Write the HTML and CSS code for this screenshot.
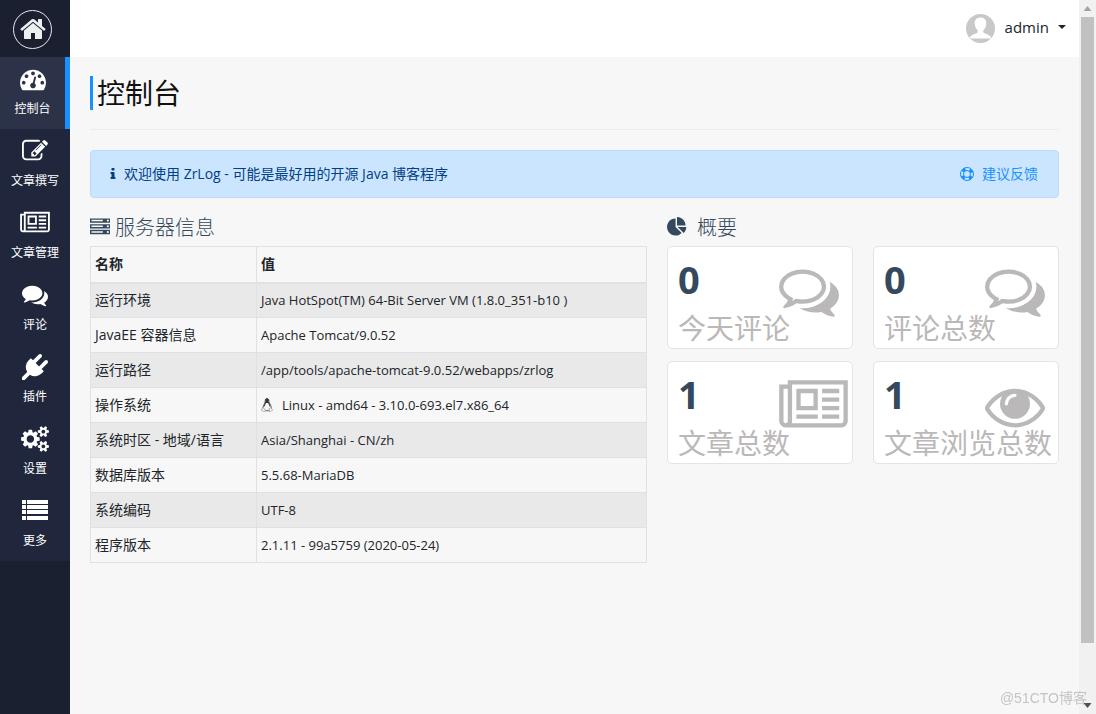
FILE: index.html
```html
<!DOCTYPE html>
<html lang="zh-CN">
<head>
<meta charset="utf-8">
<meta name="viewport" content="width=device-width, initial-scale=1">
<title>控制台</title>
<link rel="stylesheet" href="styles.css">
</head>
<body>
<svg class="sprite" aria-hidden="true">
  <symbol id="comments-o" viewBox="0 0 1792 1792" preserveAspectRatio="xMinYMid meet"><path d="M704 384q-153 0-286 52t-211.5 141-78.5 191q0 82 53 158t149 132l97 56-35 84q34-20 62-39l44-31 53 10q78 14 153 14 153 0 286-52t211.5-141 78.5-191-78.5-191-211.5-141-286-52zm0-128q191 0 353.500 68.500t256.500 186.500 94 257-94 257-256.500 186.500-353.500 68.500q-86 0-176-16-124 88-278 128-36 9-86 16h-3q-11 0-20.500-8t-11.500-21q-1-3-1-6.500t.5-6.500 2-6l2.500-5 3.500-5.500 4-5 4.500-5 4-4.500q5-6 23-25t26-29.500 22.500-29 25-38.500 20.500-44q-124-72-195-177t-71-224q0-139 94-257t256.500-186.500 353.500-68.500zm822 1169q10 24 20.500 44t25 38.500 22.500 29 26 29.500 23 25q1 1 4 4.500t4.500 5 4 5 3.500 5.500l2.500 5 2 6 .5 6.500-1 6.500q-3 14-13 22t-22 7q-50-7-86-16-154-40-278-128-90 16-176 16-271 0-472-132 58 4 88 4 161 0 309-45t264-129q125-92 192-212t67-254q0-77-23-152 129 71 204 178t75 230q0 120-71 224.500t-195 176.500z"/></symbol>
  <symbol id="newspaper" viewBox="0 0 2048 1792"><path fill-rule="evenodd" d="M1024 512h-384v384h384v-384zm128 640v128h-640v-128h640zm0-768v640h-640v-640h640zm640 768v128h-512v-128h512zm0-256v128h-512v-128h512zm0-256v128h-512v-128h512zm0-256v128h-512v-128h512zm-1536 960v-960h-128v960q0 26 19 45t45 19 45-19 19-45zm1664 0v-1088h-1536v1088q0 33-11 64h1483q26 0 45-19t19-45zm128-1216v1216q0 80-56 136t-136 56h-1664q-80 0-136-56t-56-136v-1088h256v-128h1792z"/></symbol>
</svg>
<div class="app">
  <aside class="sidebar">
    <a class="logo" href="#" aria-label="首页"><span class="logo-ring"><svg class="logo-icon" viewBox="0 0 1792 1792"><path d="M1472 992v480q0 26-19 45t-45 19h-384v-384h-256v384h-384q-26 0-45-19t-19-45v-480q0-1 .5-3t.5-3l575-474 575 474q1 2 1 6zm223-69l-62 74q-8 9-21 11h-3q-13 0-21-7l-692-577-692 577q-12 8-24 7-13-2-21-11l-62-74q-8-10-7-23.500t11-21.500l719-599q32-26 76-26t76 26l244 204v-195q0-14 9-23t23-9h192q14 0 23 9t9 23v408l219 182q10 8 11 21.500t-7 23.500z"/></svg></span></a>
    <nav class="menu">
      <a class="menu-item active" href="#"><svg class="menu-icon" viewBox="0 0 1792 1792"><path fill-rule="evenodd" d="M384 1152q0-53-37.500-90.500t-90.500-37.500-90.500 37.500-37.500 90.500 37.500 90.500 90.500 37.500 90.500-37.500 37.500-90.500zm192-448q0-53-37.500-90.500t-90.500-37.500-90.500 37.500-37.500 90.500 37.500 90.500 90.500 37.500 90.500-37.500 37.500-90.500zm428 481l101-382q6-26-7.500-48.500t-38.500-29.500-48 6.500-30 39.500l-101 382q-60 5-107 43.500t-63 98.500q-20 77 20 146t117 89 146-20 89-117q16-60-6-117t-72-91zm660-33q0-53-37.500-90.500t-90.500-37.500-90.500 37.500-37.500 90.500 37.500 90.500 90.500 37.500 90.500-37.500 37.500-90.500zm-640-640q0-53-37.500-90.500t-90.500-37.500-90.500 37.500-37.500 90.500 37.500 90.500 90.500 37.500 90.500-37.500 37.500-90.500zm448 192q0-53-37.500-90.500t-90.500-37.500-90.500 37.500-37.500 90.500 37.500 90.500 90.500 37.500 90.500-37.500 37.500-90.500zm320 448q0 261-141 483-19 29-54 29h-1402q-35 0-54-29-141-221-141-483 0-182 71-348t191-286 286-191 348-71 348 71 286 191 191 286 71 348z"/></svg><span>控制台</span></a>
      <a class="menu-item" href="#"><svg class="menu-icon" viewBox="0 0 1792 1792"><path d="M888 1184l116-116-152-152-116 116v56h96v96h56zm440-720q-16-16-33 1l-350 350q-17 17-1 33t33-1l350-350q17-17 1-33zm80 594v190q0 119-84.500 203.500t-203.500 84.500h-832q-119 0-203.500-84.500t-84.500-203.500v-832q0-119 84.500-203.500t203.500-84.500h832q63 0 117 25 15 7 18 23 3 17-9 29l-49 49q-14 14-32 8-23-6-45-6h-832q-66 0-113 47t-47 113v832q0 66 47 113t113 47h832q66 0 113-47t47-113v-126q0-13 9-22l64-64q15-15 35-7t20 29zm-96-738l288 288-672 672h-288v-288zm444 132l-92 92-288-288 92-92q28-28 68-28t68 28l152 152q28 28 28 68t-28 68z"/></svg><span>文章撰写</span></a>
      <a class="menu-item" href="#"><svg class="menu-icon wide"><use href="#newspaper"/></svg><span>文章管理</span></a>
      <a class="menu-item" href="#"><svg class="menu-icon" viewBox="0 0 1792 1792"><path d="M1408 768q0 139-94 257t-256.500 186.500-353.500 68.500q-86 0-176-16-124 88-278 128-36 9-86 16h-3q-11 0-20.500-8t-11.500-21q-1-3-1-6.500t.5-6.500 2-6l2.500-5 3.500-5.500 4-5 4.500-5 4-4.500q5-6 23-25t26-29.500 22.500-29 25-38.500 20.500-44q-124-72-195-177t-71-224q0-139 94-257t256.500-186.500 353.500-68.500 353.500 68.500 256.500 186.500 94 257zm384 256q0 120-71 224.500t-195 176.500q10 24 20.500 44t25 38.500 22.500 29 26 29.500 23 25q1 1 4 4.500t4.500 5 4 5 3.500 5.500l2.500 5 2 6 .5 6.500-1 6.500q-3 14-13 22t-22 7q-50-7-86-16-154-40-278-128-90 16-176 16-271 0-472-132 58 4 88 4 161 0 309-45t264-129q125-92 192-212t67-254q0-77-23-152 129 71 204 178t75 230z"/></svg><span>评论</span></a>
      <a class="menu-item" href="#"><svg class="menu-icon" viewBox="0 0 1792 1792"><path d="M1755 453q37 38 37 90.500t-37 90.500l-401 400 150 150-160 160q-163 163-389.500 186.500t-411.500-100.500l-362 362h-181v-181l362-362q-124-185-100.500-411.500t186.500-389.500l160-160 150 150 400-401q38-37 91-37t90 37 37 90.500-37 90.500l-400 401 234 234 401-400q38-37 91-37t90 37z"/></svg><span>插件</span></a>
      <a class="menu-item" href="#"><svg class="menu-icon cogs" viewBox="0 0 1920 1792"><path fill-rule="evenodd" d="M896 896q0-106-75-181t-181-75-181 75-75 181 75 181 181 75 181-75 75-181zm768 512q0-52-38-90t-90-38-90 38-38 90q0 53 37.500 90.500t90.500 37.500 90.500-37.500 37.500-90.500zm0-1024q0-52-38-90t-90-38-90 38-38 90q0 53 37.500 90.500t90.500 37.500 90.500-37.500 37.500-90.500zm-384 421v185q0 10-7 19.500t-16 10.500l-155 24q-11 35-32 76 34 48 90 115 7 11 7 20 0 12-7 19-23 30-82.500 89.500t-78.500 59.500q-11 0-21-7l-115-90q-37 19-77 31-11 108-23 155-7 24-30 24h-186q-11 0-20-7.500t-10-17.500l-23-153q-34-10-75-31l-118 89q-7 7-20 7-11 0-21-8-144-133-144-160 0-9 7-19 10-14 41-53t47-61q-23-44-35-82l-152-24q-10-1-17-9.500t-7-19.500v-185q0-10 7-19.500t16-10.500l155-24q11-35 32-76-34-48-90-115-7-11-7-20 0-12 7-20 22-30 82-89t79-59q11 0 21 7l115 90q34-18 77-32 11-108 23-154 7-24 30-24h186q11 0 20 7.500t10 17.500l23 153q34 10 75 31l118-89q8-7 20-7 11 0 21 8 144 133 144 160 0 8-7 19-12 16-42 54t-45 60q23 48 34 82l152 23q10 2 17 10.500t7 19.500zm640 533v140q0 16-149 31-12 27-30 52 51 113 51 138 0 4-4 7-122 71-124 71-8 0-46-47t-52-68q-20 2-30 2t-30-2q-14 21-52 68t-46 47q-2 0-124-71-4-3-4-7 0-25 51-138-18-25-30-52-149-15-149-31v-140q0-16 149-31 13-29 30-52-51-113-51-138 0-4 4-7 4-2 35-20t59-34 30-16q8 0 46 46.500t52 67.500q20-2 30-2t30 2q51-71 92-112l6-2q4 0 124 70 4 3 4 7 0 25-51 138 17 23 30 52 149 15 149 31zm0-1024v140q0 16-149 31-12 27-30 52 51 113 51 138 0 4-4 7-122 71-124 71-8 0-46-47t-52-68q-20 2-30 2t-30-2q-14 21-52 68t-46 47q-2 0-124-71-4-3-4-7 0-25 51-138-18-25-30-52-149-15-149-31v-140q0-16 149-31 13-29 30-52-51-113-51-138 0-4 4-7 4-2 35-20t59-34 30-16q8 0 46 46.500t52 67.500q20-2 30-2t30 2q51-71 92-112l6-2q4 0 124 70 4 3 4 7 0 25-51 138 17 23 30 52 149 15 149 31z"/></svg><span>设置</span></a>
      <a class="menu-item" href="#"><svg class="menu-icon" viewBox="0 0 26 26"><path d="M0 2h4v4H0zM5 2h21v4H5zM0 7h4v4H0zM5 7h21v4H5zM0 12h4v4H0zM5 12h21v4H5zM0 18h4v4H0zM5 18h21v4H5z"/></svg><span>更多</span></a>
    </nav>
  </aside>

  <div class="page">
    <header class="topbar">
      <button class="user" type="button">
        <svg class="avatar" viewBox="0 0 29 29"><circle cx="14.500" cy="14.500" r="14.500" fill="#c8c8c8"/><path fill="#fff" d="M14.500 3.500c-4 0-6 2.600-5.800 6.200.1 2.600 1.200 5 3 6.500v2.100c0 1.400-7.700 2-8.200 6.200h22c-.5-4.200-8.200-4.800-8.200-6.200v-2.100c1.800-1.500 2.900-3.900 3-6.500.2-3.600-1.800-6.200-5.800-6.200z"/></svg>
        <span class="user-name">admin</span><span class="caret"></span>
      </button>
    </header>

    <main class="content">
      <div class="page-title"><h1>控制台</h1></div>
      <div class="alert">
        <svg class="alert-icon" viewBox="0 0 1792 1792"><path d="M1216 1344v128q0 26-19 45t-45 19h-512q-26 0-45-19t-19-45v-128q0-26 19-45t45-19h64v-384h-64q-26 0-45-19t-19-45v-128q0-26 19-45t45-19h384q26 0 45 19t19 45v576h64q26 0 45 19t19 45zm-128-1152v192q0 26-19 45t-45 19h-256q-26 0-45-19t-19-45v-192q0-26 19-45t45-19h256q26 0 45 19t19 45z"/></svg>
        <span class="alert-text">欢迎使用 ZrLog - 可能是最好用的开源 Java 博客程序</span>
        <a class="feedback" href="#"><svg class="ring" viewBox="0 0 14 14"><g fill="none" stroke="currentColor"><circle cx="7" cy="7" r="6.500"/><circle cx="7" cy="7" r="3.500"/><circle cx="7" cy="7" r="5" stroke-width="3" stroke-dasharray="3.600 4.254" stroke-dashoffset="-2.127"/></g></svg>建议反馈</a>
      </div>

      <div class="row">
        <section class="col">
          <h2><svg class="h-icon" viewBox="0 0 1792 1792"><path fill-rule="evenodd" d="M128 1408h1024v-128h-1024v128zm0-512h1024v-128h-1024v128zm1568 448q0-40-28-68t-68-28-68 28-28 68 28 68 68 28 68-28 28-68zm-1568-960h1024v-128h-1024v128zm1568 448q0-40-28-68t-68-28-68 28-28 68 28 68 68 28 68-28 28-68zm0-512q0-40-28-68t-68-28-68 28-28 68 28 68 68 28 68-28 28-68zm96 832v384h-1792v-384h1792zm0-512v384h-1792v-384h1792zm0-512v384h-1792v-384h1792z"/></svg>服务器信息</h2>
          <table class="info">
            <thead><tr><th class="key">名称</th><th>值</th></tr></thead>
            <tbody>
              <tr><td>运行环境</td><td class="val">Java HotSpot(TM) 64-Bit Server VM (1.8.0_351-b10 )</td></tr>
              <tr><td>JavaEE 容器信息</td><td class="val">Apache Tomcat/9.0.52</td></tr>
              <tr><td>运行路径</td><td class="val">/app/tools/apache-tomcat-9.0.52/webapps/zrlog</td></tr>
              <tr><td>操作系统</td><td class="val"><svg class="linux" viewBox="0 0 12 14"><path fill="#f7f7f7" stroke="#333" stroke-width=".8" d="M4.200 3.500C4 1.400 4.700.5 6 .5s2 1 1.900 2.800c0 1.500 2.300 3.700 2.300 6.200 0 2-1.600 3.300-4.200 3.300S2 11.500 2 9.500c0-2.200 2.200-3.800 2.200-6z"/><path fill="#333" d="M4.400 1.500C5 .2 7 .2 7.600 1.500v2.300L9.400 8l-.6.8L7.100 5H5L3.300 8.800 2.700 8l1.700-4.200z"/><path fill="#f7f7f7" stroke="#888" stroke-width=".6" d="M.5 12.500l.5-2 1.500-.8 2 3-1 1zM11.500 12.300L11 11l-1-1.200-1.700.7-.1 3 1.200.2z"/></svg>Linux - amd64 - 3.10.0-693.el7.x86_64</td></tr>
              <tr><td>系统时区 - 地域/语言</td><td class="val">Asia/Shanghai - CN/zh</td></tr>
              <tr><td>数据库版本</td><td class="val">5.5.68-MariaDB</td></tr>
              <tr><td>系统编码</td><td class="val">UTF-8</td></tr>
              <tr><td>程序版本</td><td class="val">2.1.11 - 99a5759 (2020-05-24)</td></tr>
            </tbody>
          </table>
        </section>

        <section class="col">
          <h2 class="summary"><svg class="h-icon" viewBox="0 0 1792 1792"><path d="M768 890l546 546q-106 108-247.500 168t-298.500 60q-209 0-385.500-103t-279.500-279.500-103-385.500 103-385.500 279.500-279.500 385.500-103v762zm187 6h773q0 157-60 298.500t-168 247.500zm709-128h-768v-768q209 0 385.500 103t279.500 279.500 103 385.500z"/></svg>概要</h2>
          <div class="cards">
            <div class="card"><strong>0</strong><span>今天评论</span><svg class="card-icon"><use href="#comments-o"/></svg></div>
            <div class="card"><strong>0</strong><span>评论总数</span><svg class="card-icon"><use href="#comments-o"/></svg></div>
            <div class="card"><strong>1</strong><span>文章总数</span><svg class="card-icon"><use href="#newspaper"/></svg></div>
            <div class="card"><strong>1</strong><span>文章浏览总数</span><svg class="card-icon" viewBox="0 0 1792 1792" preserveAspectRatio="xMinYMid meet"><path d="M1664 960q-152-236-381-353 61 104 61 225 0 185-131.500 316.500t-316.500 131.500-316.500-131.500-131.500-316.500q0-121 61-225-229 117-381 353 133 205 333.500 326.500t434.500 121.500 434.500-121.500 333.500-326.500zm-720-384q0-20-14-34t-34-14q-125 0-214.500 89.500t-89.500 214.500q0 20 14 34t34 14 34-14 14-34q0-86 61-147t147-61q20 0 34-14t14-34zm848 384q0 34-20 69-140 230-376.500 368.500t-499.500 138.500-499.500-139-376.500-368q-20-35-20-69t20-69q140-229 376.500-368t499.500-139 499.500 139 376.500 368q20 35 20 69z"/></svg></div>
          </div>
        </section>
      </div>
    </main>
  </div>

  <div class="scrollbar" aria-hidden="true"><span class="arrow up"></span><span class="track"><span class="thumb"></span></span><span class="arrow down"></span></div>
</div>
<div class="watermark">@51CTO博客</div>
</body>
</html>
```
FILE: styles.css
```css
* { box-sizing: border-box; }
body {
  margin: 0;
  background: #f7f7f7;
  color: #212529;
  font: 14px/20px "Open Sans", "Noto Sans CJK SC", sans-serif;
}
a { color: inherit; text-decoration: none; }
svg { fill: currentColor; flex: none; }
.sprite { display: none; }
.app { display: flex; min-height: 100vh; }

.sidebar { flex: none; width: 70px; background: #1a2030; color: #fff; }
.logo { display: flex; align-items: center; height: 57px; padding: 1px 0 0 13px; color: #ecf0f1; }
.logo-ring {
  display: flex;
  align-items: center;
  justify-content: center;
  width: 39px;
  height: 39px;
  border: 1px solid #eaeaea;
  border-radius: 50%;
}
.logo-icon { width: 28px; height: 28px; }
.menu { background: #20273d; }
.menu-item {
  display: flex;
  flex-direction: column;
  align-items: center;
  gap: 7px;
  height: 72px;
  padding-top: 9px;
  font-size: 12px;
}
.menu-item.active { background: #2c3349; border-right: 5px solid #1890ff; }
.menu-icon { width: 26px; height: 26px; }
.menu-icon.wide { width: 30px; }
.menu-icon.cogs { width: 28px; }

.page { flex: 1; min-width: 0; }
.topbar {
  display: flex;
  align-items: center;
  justify-content: flex-end;
  height: 57px;
  padding-right: 13px;
  background: #fff;
}
.user {
  display: flex;
  align-items: center;
  padding: 0;
  border: 0;
  background: none;
  color: #212529;
  font: 15px/20px "Open Sans", "Noto Sans CJK SC", sans-serif;
}
.avatar { width: 29px; height: 29px; margin-right: 10px; }
.user-name { padding-bottom: 3px; }
.caret {
  margin: 0 0 4px 9px;
  border: 4px solid transparent;
  border-top-color: #212529;
  border-bottom: 0;
}

.content { padding: 19px 20px; }
.page-title { padding-bottom: 19px; border-bottom: 1px solid #ececec; }
h1 {
  margin: 0;
  padding: 1px 0 0 4px;
  border-left: 3px solid #1890ff;
  font-size: 28px;
  line-height: 33px;
  font-weight: 400;
  color: #111;
}
.alert {
  display: flex;
  align-items: center;
  height: 48px;
  margin-top: 20px;
  padding: 0 20px 0 15px;
  border: 1px solid #b8daff;
  border-radius: 4px;
  background: #cce5ff;
  color: #004085;
}
.alert-icon { width: 14px; height: 14px; margin-right: 4px; }
.alert-text { flex: 1; }
.feedback { display: flex; align-items: center; gap: 8px; color: #1890ff; }
.ring { width: 14px; height: 14px; }

.row { display: grid; grid-template-columns: minmax(0, 7fr) minmax(0, 5fr); margin: 0 -10px; }
.col { padding: 18px 10px 0; }
h2 {
  display: flex;
  align-items: center;
  gap: 5px;
  margin: 0 0 6px;
  font-size: 20px;
  line-height: 24px;
  font-weight: 300;
  color: #34495e;
}
h2.summary { gap: 10px; }
.h-icon { width: 20px; height: 20px; margin-bottom: 2px; }

.info { width: 100%; border-collapse: collapse; }
.info th, .info td { height: 35px; padding: 0 4px; border: 1px solid #dee2e6; text-align: left; }
.info thead th { height: 36px; border-bottom-width: 2px; }
.info .key { width: 166px; }
.info .val { font-size: 13px; }
.info tbody tr:nth-child(odd) { background: #e9e9e9; }
.linux { width: 12px; height: 14px; margin-right: 9px; vertical-align: -2px; }

.cards { display: grid; grid-template-columns: repeat(2, minmax(0, 1fr)); gap: 12px 20px; }
.card {
  position: relative;
  display: flex;
  flex-direction: column;
  padding: 12px 0 0 10px;
  height: 103px;
  border: 1px solid #e4e4e4;
  border-radius: 5px;
  background: #fff;
  color: #bab8b8;
  font-size: 28px;
  line-height: 40px;
  white-space: nowrap;
}
.card strong { font-size: 38px; line-height: 40px; color: #34495e; }
.card span { margin-top: 9px; }
.card-icon { position: absolute; top: 14px; right: 4px; width: 69px; height: 60px; }

.scrollbar {
  display: flex;
  flex-direction: column;
  flex: none;
  align-items: center;
  width: 17px;
  background: #f1f1f1;
}
.track { flex: 1; width: 13px; }
.thumb { display: block; height: 92%; background: #c1c1c1; }
.arrow { flex: none; width: 8px; height: 17px; background: #a3a3a3; }
.arrow.up { clip-path: polygon(0 11px, 4px 6px, 8px 11px); }
.arrow.down { background: #505050; clip-path: polygon(0 6px, 8px 6px, 4px 11px); }
.watermark {
  position: fixed;
  right: 9px;
  bottom: 6px;
  color: #c4c4c4;
  font-family: "Liberation Sans", "Noto Sans CJK SC", sans-serif;
}
```
